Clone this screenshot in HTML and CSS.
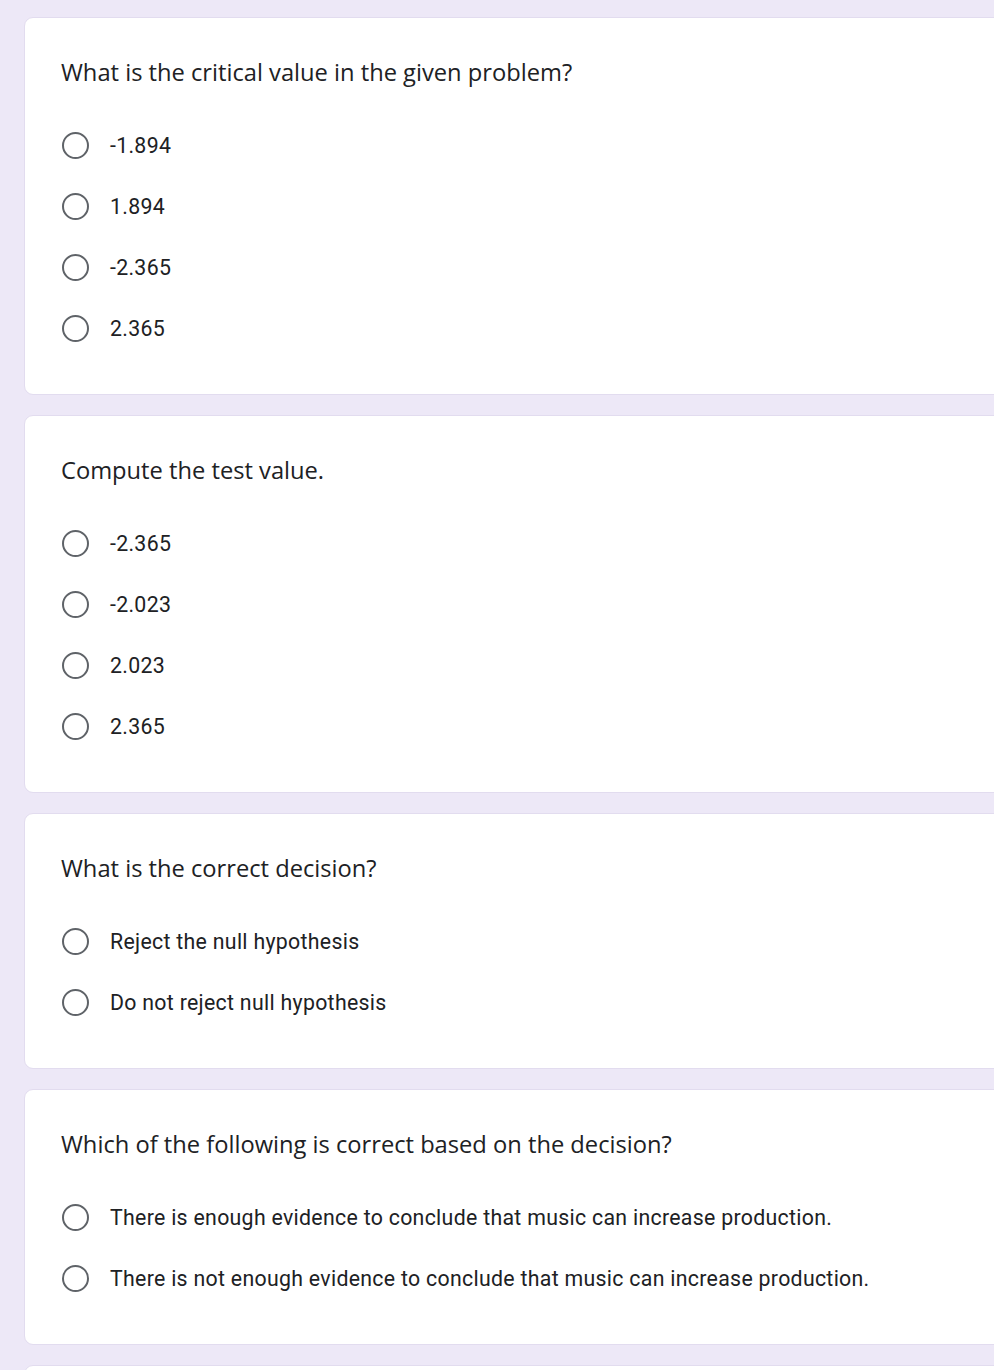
FILE: index.html
```html
<!DOCTYPE html>
<html>
<head>
<meta charset="utf-8">
<link rel="stylesheet" href="styles.css">
</head>
<body>
<div class="page">
  <div class="card">
    <div class="title">What is the critical value in the given problem?</div>
    <div class="options">
      <div class="opt"><span class="radio"></span><span class="label">-1.894</span></div>
      <div class="opt"><span class="radio"></span><span class="label">1.894</span></div>
      <div class="opt"><span class="radio"></span><span class="label">-2.365</span></div>
      <div class="opt"><span class="radio"></span><span class="label">2.365</span></div>
    </div>
  </div>
  <div class="card">
    <div class="title">Compute the test value.</div>
    <div class="options">
      <div class="opt"><span class="radio"></span><span class="label">-2.365</span></div>
      <div class="opt"><span class="radio"></span><span class="label">-2.023</span></div>
      <div class="opt"><span class="radio"></span><span class="label">2.023</span></div>
      <div class="opt"><span class="radio"></span><span class="label">2.365</span></div>
    </div>
  </div>
  <div class="card">
    <div class="title">What is the correct decision?</div>
    <div class="options">
      <div class="opt"><span class="radio"></span><span class="label">Reject the null hypothesis</span></div>
      <div class="opt"><span class="radio"></span><span class="label">Do not reject null hypothesis</span></div>
    </div>
  </div>
  <div class="card">
    <div class="title">Which of the following is correct based on the decision?</div>
    <div class="options">
      <div class="opt"><span class="radio"></span><span class="label">There is enough evidence to conclude that music can increase production.</span></div>
      <div class="opt"><span class="radio"></span><span class="label">There is not enough evidence to conclude that music can increase production.</span></div>
    </div>
  </div>
  <div class="card card-tail"></div>
</div>
</body>
</html>
```

FILE: styles.css
```css
html, body {
  margin: 0;
  padding: 0;
  background: #ede8f7;
  overflow: hidden;
}
.page {
  display: flex;
  flex-direction: column;
  gap: 20px;
  padding: 17px 0 0 24px;
  height: 1370px;
  box-sizing: border-box;
}
.card {
  background: #ffffff;
  border: 1px solid #e2dcef;
  border-radius: 9px;
  margin-right: -30px;
  padding: 39px 0 35px 36px;
  flex-shrink: 0;
}
.card-tail {
  height: 200px;
  padding: 0;
}
.title {
  font-family: "Open Sans", "Liberation Sans", sans-serif;
  font-size: 23.7px;
  font-weight: 500;
  line-height: 30px;
  color: #202124;
}
.options {
  margin-top: 28px;
  display: flex;
  flex-direction: column;
}
.opt {
  display: flex;
  align-items: center;
  height: 61px;
}
.radio {
  width: 23px;
  height: 23px;
  border: 2.8px solid #5f6368;
  border-radius: 50%;
  margin-left: 1px;
  flex-shrink: 0;
}
.label {
  margin-left: 21px;
  font-family: Roboto, "Liberation Sans", sans-serif;
  font-size: 21.3px;
  color: #202124;
  letter-spacing: 0.3px;
}
```
